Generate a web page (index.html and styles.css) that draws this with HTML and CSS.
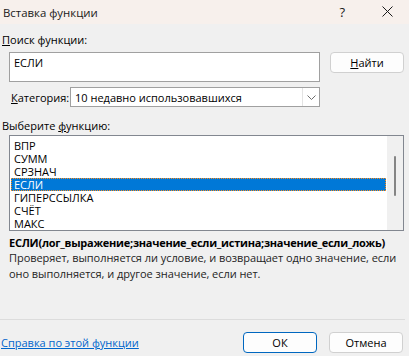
FILE: index.html
```html
<!DOCTYPE html>
<html lang="ru">
<head>
    <meta charset="UTF-8">
    <title>Вставка функции</title>
    <link rel="stylesheet" href="styles.css">
</head>
<body>
    <div class="dialog">
        <div class="titlebar">
            <span class="title">Вставка функции</span>
            <span class="help">?</span>
            <svg class="close" width="11" height="11" viewBox="0 0 11 11">
                <path d="M0.5 0.5 L10.5 10.5 M10.5 0.5 L0.5 10.5" stroke="#1a1a1a" stroke-width="1" fill="none"/>
            </svg>
        </div>

        <div class="content">
            <div class="label"><u>П</u>оиск функции:</div>
            <div class="search-row">
                <div class="search-box">ЕСЛИ</div>
                <button class="btn"><u>Н</u>айти</button>
            </div>

            <div class="category-row">
                <span class="cat-label"><u>К</u>атегория:</span>
                <div class="select">
                    <span class="select-text">10 недавно использовавшихся</span>
                    <span class="select-arrow">
                        <svg width="9" height="5" viewBox="0 0 9 5">
                            <path d="M0.5 0.5 L4.5 4.5 L8.5 0.5" stroke="#6d6d6d" fill="none"/>
                        </svg>
                    </span>
                </div>
            </div>

            <div class="label pick-label">Выберите <u>ф</u>ункцию:</div>
            <div class="listbox">
                <ul class="items">
                    <li>ВПР</li>
                    <li>СУММ</li>
                    <li>СРЗНАЧ</li>
                    <li class="selected">ЕСЛИ</li>
                    <li>ГИПЕРССЫЛКА</li>
                    <li>СЧЁТ</li>
                    <li>МАКС</li>
                </ul>
                <div class="scrollbar"><div class="thumb"></div></div>
            </div>

            <div class="signature">ЕСЛИ(лог_выражение;значение_если_истина;значение_если_ложь)</div>
            <div class="description">Проверяет, выполняется ли условие, и возвращает одно значение, если оно выполняется, и другое значение, если нет.</div>
        </div>

        <div class="footer">
            <a href="#" class="help-link">Справка по этой функции</a>
            <div class="buttons">
                <button class="btn default">ОК</button>
                <button class="btn">Отмена</button>
            </div>
        </div>
    </div>
</body>
</html>
```

FILE: styles.css
```css
* {
    box-sizing: border-box;
}

body {
    margin: 0;
    padding: 0;
    font-family: 'Open Sans', 'Noto Sans', sans-serif;
    font-size: 11px;
    color: #000;
    background: #f0f0f0;
}

.dialog {
    width: 409px;
    height: 356px;
    background: #f0f0f0;
    overflow: hidden;
}

.titlebar {
    height: 24px;
    background: #f7f0ec;
    display: flex;
    align-items: center;
    padding-left: 3px;
}

.title {
    flex: 1;
    font-size: 11.4px;
    color: #1a1a1a;
}

.help {
    font-size: 13px;
    color: #1a1a1a;
    margin-right: 37px;
}

.close {
    margin-right: 16px;
    margin-top: -2px;
}

.content {
    padding-top: 8px;
}

.label {
    height: 20px;
    line-height: 16px;
    padding-left: 2px;
    white-space: nowrap;
}

.search-row {
    display: flex;
    align-items: flex-start;
    padding-left: 9px;
    gap: 10px;
}

.search-box {
    width: 311px;
    height: 30px;
    background: #fff;
    border: 1px solid #a0a0a0;
    padding: 2px 4px;
    line-height: 16px;
}

.btn {
    width: 74px;
    height: 21px;
    padding: 0;
    font-family: inherit;
    font-size: 11px;
    color: #000;
    background: #fdfdfd;
    border: 1px solid #d0d0d0;
    border-radius: 4px;
}

.btn.default {
    border-color: #0067c0;
}

.category-row {
    display: flex;
    align-items: center;
    padding-left: 11px;
    margin-top: 5px;
    height: 20px;
}

.cat-label {
    width: 59px;
    white-space: nowrap;
}

.select {
    width: 250px;
    height: 20px;
    border: 1px solid #a0a0a0;
    background: #fff;
    display: flex;
    align-items: center;
}

.select-text {
    flex: 1;
    padding-left: 4px;
    white-space: nowrap;
}

.select-arrow {
    width: 17px;
    height: 18px;
    border-left: 1px solid #e3e3e3;
    display: flex;
    align-items: center;
    justify-content: center;
}

.pick-label {
    margin-top: 11px;
    height: 17px;
}

.listbox {
    margin-left: 9px;
    width: 395px;
    height: 96px;
    border: 1px solid #828790;
    background: #fff;
    display: flex;
}

.items {
    list-style: none;
    margin: 0;
    padding: 3px 0 0 1px;
    flex: 1;
}

.items li {
    height: 13px;
    line-height: 13px;
    padding-left: 3px;
    margin-right: 1px;
}

.items li.selected {
    background: #0078d7;
    color: #fff;
    outline: 1px dotted #ff8c1a;
    outline-offset: -1px;
}

.scrollbar {
    width: 16px;
    background: #f0f0f0;
    display: flex;
    justify-content: center;
    padding-top: 20px;
}

.thumb {
    width: 2px;
    height: 40px;
    background: #858585;
    border-radius: 1px;
}

.signature {
    margin-top: 4px;
    padding-left: 9px;
    font-weight: bold;
    line-height: 15px;
    letter-spacing: -0.25px;
    white-space: nowrap;
}

.description {
    padding-left: 9px;
    padding-right: 2px;
    line-height: 16px;
    letter-spacing: -0.05px;
    color: #1e1e1e;
}

.footer {
    border-top: 1px solid #dcdcdc;
    margin-top: 37px;
    margin-right: 4px;
    padding-top: 12px;
    display: flex;
    justify-content: space-between;
    align-items: center;
}

.help-link {
    padding-left: 1px;
    color: #0066cc;
    text-decoration: underline;
}

.buttons {
    display: flex;
    gap: 12px;
    margin-right: 2px;
}
```
